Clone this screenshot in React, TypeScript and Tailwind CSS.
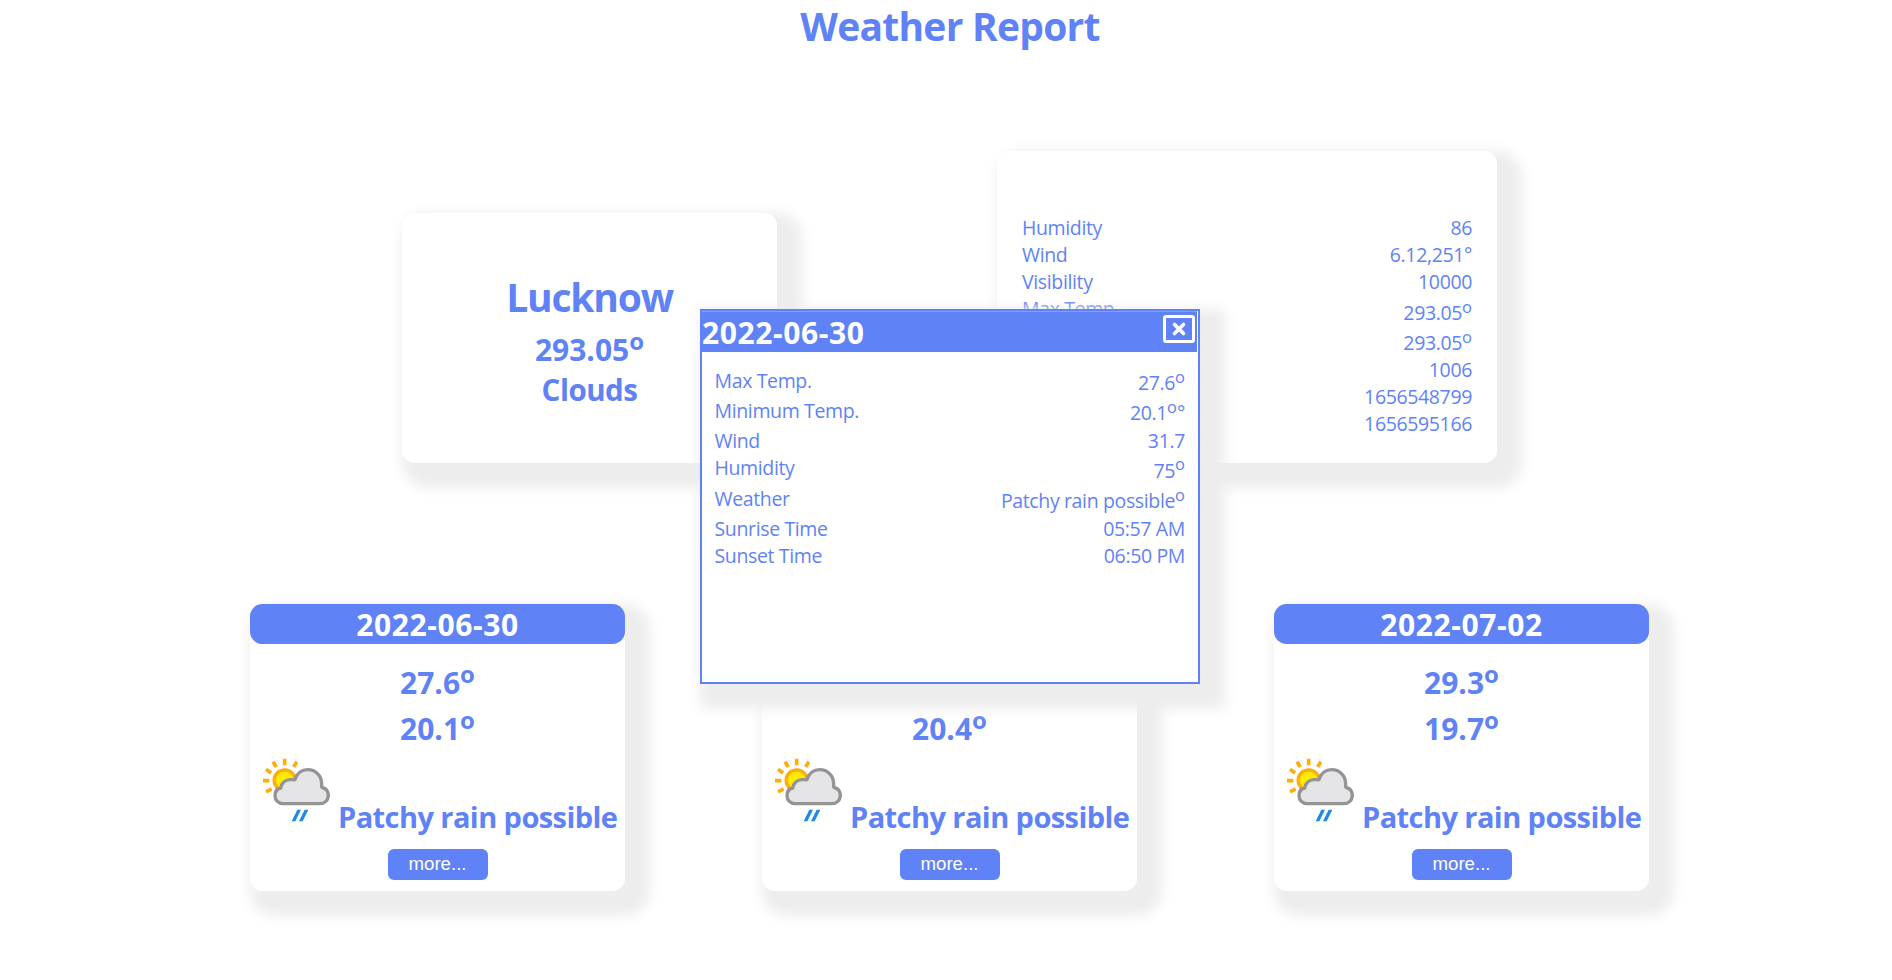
import React from "react";

type Row = { label: string; value: string; degree?: boolean; suffix?: string };

const current: Row[] = [
  { label: "Humidity", value: "86" },
  { label: "Wind", value: "6.12,251°" },
  { label: "Visibility", value: "10000" },
  { label: "Max Temp.", value: "293.05", degree: true },
  { label: "Min Temp.", value: "293.05", degree: true },
  { label: "Pressure", value: "1006" },
  { label: "Sunrise", value: "1656548799" },
  { label: "Sunset", value: "1656595166" },
];

const details: Row[] = [
  { label: "Max Temp.", value: "27.6", degree: true },
  { label: "Minimum Temp.", value: "20.1", degree: true, suffix: "°" },
  { label: "Wind", value: "31.7" },
  { label: "Humidity", value: "75", degree: true },
  { label: "Weather", value: "Patchy rain possible", degree: true },
  { label: "Sunrise Time", value: "05:57 AM" },
  { label: "Sunset Time", value: "06:50 PM" },
];

const forecast = [
  { date: "2022-06-30", max: "27.6", min: "20.1" },
  { date: "2022-07-01", max: "28.4", min: "20.4" },
  { date: "2022-07-02", max: "29.3", min: "19.7" },
];

function Rows({ rows, valueOffset }: { rows: Row[]; valueOffset: string }) {
  return (
    <div className="flex flex-col text-[19.5px] leading-[27px] tracking-[-0.36px]">
      {rows.map((r) => (
        <div
          key={r.label}
          className={
            r.degree
              ? "flex h-[30.4px] items-start justify-between"
              : "flex h-[27px] items-start justify-between"
          }
        >
          <span>{r.label}</span>
          <span className={r.degree ? valueOffset : ""}>
            {r.value}
            {r.degree && (
              <sup className="top-0 align-[7.5px] text-[16.5px] leading-[0] tracking-normal">o</sup>
            )}
            {r.suffix}
          </span>
        </div>
      ))}
    </div>
  );
}

function Degrees({ value }: { value: string }) {
  return (
    <>
      {value}
      <sup className="top-0 align-[11px] text-[24px] leading-[0]">o</sup>
    </>
  );
}

function RainIcon() {
  return (
    <svg
      className="mb-[13px] h-[66.67px] w-[70px] shrink-0"
      viewBox="36 20 210 200"
      fill="none"
    >
      <g stroke="#ffad0a" strokeWidth="11">
        <path d="M104 28V48M140 37L131 53M69 37L79 53M48 60L63 71M39 94H58M48 128L65 119" />
      </g>
      <circle cx="104" cy="93" r="31.5" fill="#ffec00" stroke="#ffad0a" strokeWidth="10" />
      <path
        d="M99 163C85 163 75 153 75 139C75 127 82 118 92 116C94 101 107 90 122 91C128 90 132 92 135 91C140 73 155 61 173 61C196 61 215 78 215 104C215 109 214 113 216 114C227 117 235 126 235 138C235 153 224 163 209 163Z"
        fill="#e5e5e7"
        stroke="#949494"
        strokeWidth="10"
        strokeLinejoin="round"
      />
      <path d="M125 216H136L153 181H142ZM147 216H158L175 181H164Z" fill="#1e88e5" />
    </svg>
  );
}

export default function App() {
  return (
    <div className="relative h-[980px] w-full overflow-hidden bg-white font-['Open_Sans','Noto_Sans',sans-serif] text-[#5f83f6]">
      <h1 className="h-[151px] pl-2 text-center text-[39px] leading-[51px] font-bold tracking-[-0.75px]">
        Weather Report
      </h1>

      <section className="flex items-end gap-[220px] pl-[402px]">
        <div className="h-[250px] w-[375px] rounded-[12.5px] bg-white pt-[57px] text-center text-[30px] leading-[40px] font-bold shadow-[12.5px_12.5px_12.5px_12.5px_#ededed]">
          <h2 className="mb-[6px] text-[39px] leading-[54px] tracking-[-1.2px]">Lucknow</h2>
          <p>
            <Degrees value="293.05" />
          </p>
          <p className="text-[29.5px] tracking-[-0.5px]">Clouds</p>
        </div>
        <div className="h-[312px] w-[500px] rounded-[12.5px] bg-white px-[25px] pt-[63px] shadow-[12.5px_12.5px_12.5px_12.5px_#ededed]">
          <Rows rows={current} valueOffset="pt-[4px]" />
        </div>
      </section>

      <section className="mt-[141px] flex gap-[137px] pl-[250px]">
        {forecast.map((day) => (
          <div
            key={day.date}
            className="flex h-[287px] w-[375px] shrink-0 flex-col rounded-[12.5px] bg-white text-center text-[30px] leading-[40px] font-bold shadow-[12.5px_12.5px_12.5px_12.5px_#ededed]"
          >
            <div className="h-[40px] rounded-[12.5px] bg-[#5f83f6] pt-px tracking-[0.6px] text-white">{day.date}</div>
            <p className="mt-[19px]">
              <Degrees value={day.max} />
            </p>
            <p className="mt-[6px]">
              <Degrees value={day.min} />
            </p>
            <div className="flex h-[87px] items-end gap-[6px] pl-3 whitespace-nowrap">
              <RainIcon />
              <span className="text-[29px] leading-[38px] tracking-[-0.57px]">Patchy rain possible</span>
            </div>
            <button className="mt-[13px] h-[31px] w-[100px] self-center rounded-[6px] bg-[#5f83f6] pb-[2px] font-['Liberation_Sans',sans-serif] text-[18.67px] leading-[29px] font-normal text-white">
              more...
            </button>
          </div>
        ))}
      </section>

      <div className="absolute top-[308.5px] left-[700px] h-[375px] w-[500px] border-2 border-[#5f83f6] bg-white shadow-[12.5px_12.5px_12.5px_12.5px_#ededed]">
        <div className="mr-px flex h-[41px] items-start justify-between border-t border-[#86a1f8] bg-[#5f83f6] text-[30px] leading-[42px] font-bold tracking-[0.6px] text-white">
          <span>2022-06-30</span>
          <svg className="mt-[3px] mr-[2px] h-[28px] w-[32px]" viewBox="0 0 32 28" fill="none" stroke="#fff">
            <rect x="1.5" y="1.5" width="29" height="25" rx="1.5" strokeWidth="3" />
            <path d="M11.5 9.5L20.5 18.5M20.5 9.5L11.5 18.5" strokeWidth="3.6" strokeLinecap="round" />
          </svg>
        </div>
        <div className="pt-[15px] pr-[13px] pl-[12.5px]">
          <Rows rows={details} valueOffset="pt-[2.5px]" />
        </div>
      </div>
    </div>
  );
}
